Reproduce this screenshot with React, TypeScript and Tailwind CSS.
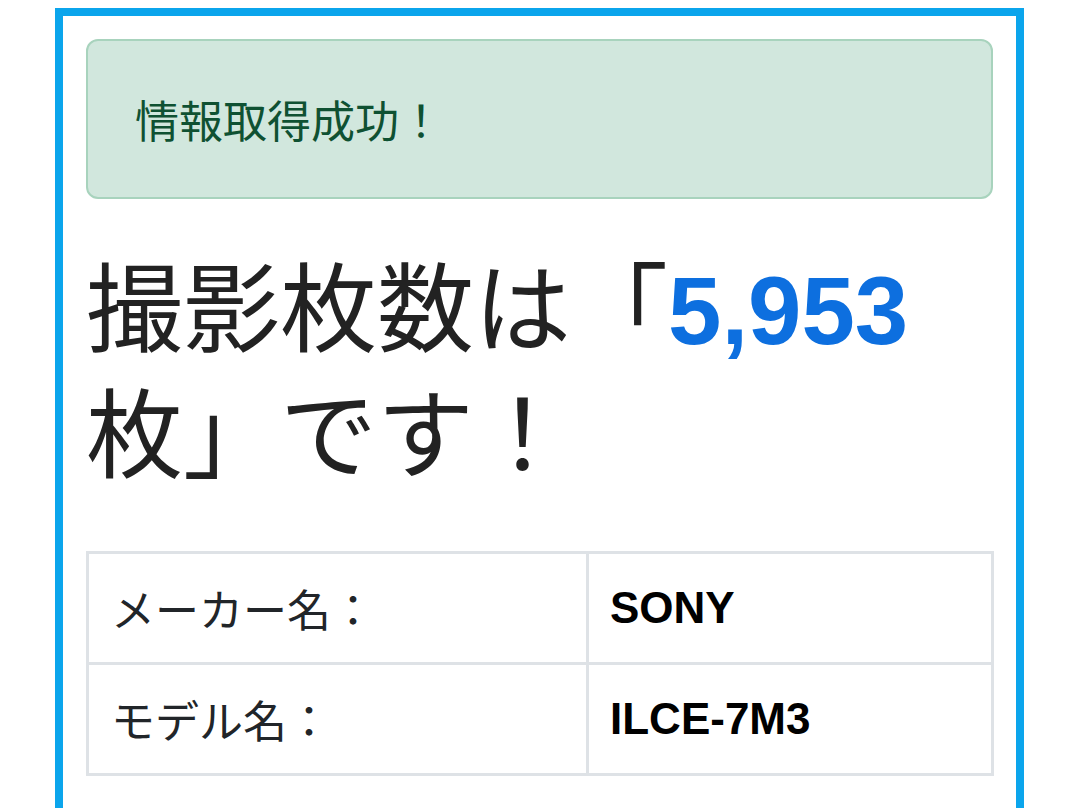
import React from "react";

export default function App() {
  return (
    <div className="min-h-[808px] bg-white font-['Liberation_Sans','Noto_Sans_CJK_JP',sans-serif]">
      <div className="mx-[55px] mt-[8px] w-[969px] border-[8px] border-b-0 border-[#0ba5ec] px-[23px] pt-[23px] pb-[40px]">
        <div className="rounded-[12px] border-2 border-[#a8d3bd] bg-[#d1e7dd] px-[47px] py-[43px] font-['Noto_Sans_CJK_JP',sans-serif] text-[44px] leading-[70px] text-[#0f5132]">
          情報取得成功！
        </div>
        <h1 className="mt-[40px] font-['Noto_Sans_CJK_JP',sans-serif] text-[97px] leading-[126px] font-normal text-[#222]">
          撮影枚数は「
          <span className="font-['Liberation_Sans',sans-serif] text-[96px] leading-none font-bold text-[#0d6fdf]">5,953</span>
          枚」です！
        </h1>
        <table className="mt-[60px] w-[908px] border-collapse text-[44px] leading-[66px]">
          <tbody>
            <tr>
              <td className="w-[500px] border-[3px] border-[#dee2e6] px-[22px] py-[21px] font-['Noto_Sans_CJK_JP',sans-serif] text-[#212529]">
                メーカー名：
              </td>
              <td className="border-[3px] border-[#dee2e6] px-[21px] py-[21px] font-bold text-black">SONY</td>
            </tr>
            <tr>
              <td className="border-[3px] border-[#dee2e6] px-[22px] py-[21px] font-['Noto_Sans_CJK_JP',sans-serif] text-[#212529]">
                モデル名：
              </td>
              <td className="border-[3px] border-[#dee2e6] px-[21px] py-[21px] font-bold text-black">ILCE-7M3</td>
            </tr>
          </tbody>
        </table>
      </div>
    </div>
  );
}
